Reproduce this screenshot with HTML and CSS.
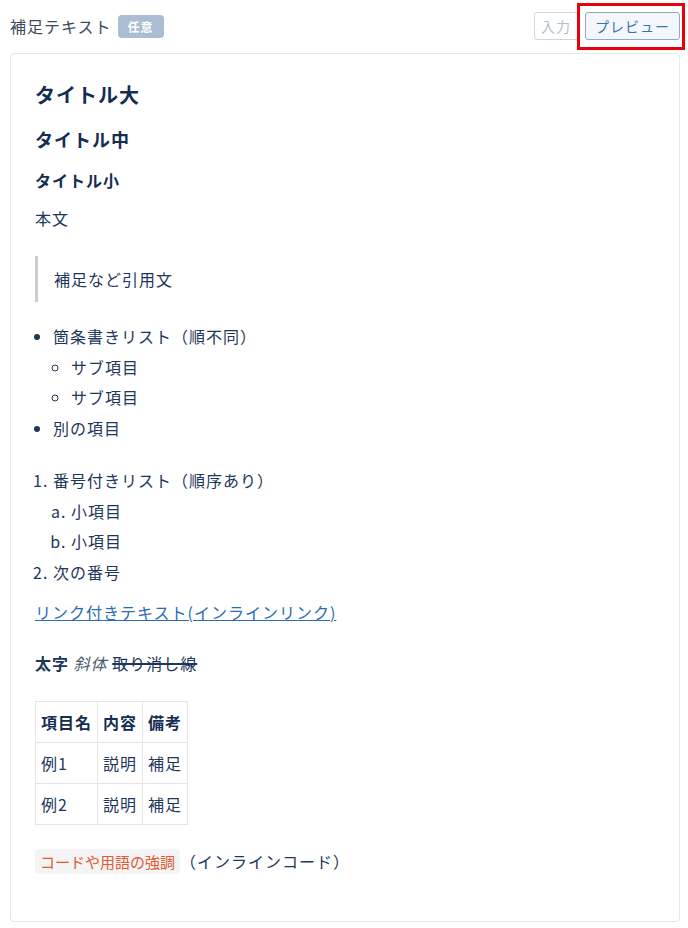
FILE: index.html
```html
<!DOCTYPE html>
<html>
<head>
    <link rel="stylesheet" href="styles.css">
</head>
<body>
    <div class="field">
        <div class="field-head">
            <div class="label">補足テキスト <span class="badge">任意</span></div>
            <div class="tabs">
                <button class="tab">入力</button>
                <button class="tab active">プレビュー<span class="mark"></span></button>
            </div>
        </div>

        <div class="preview">
            <h1>タイトル大</h1>
            <h2>タイトル中</h2>
            <h3>タイトル小</h3>
            <p class="body">本文</p>
            <blockquote>補足など引用文</blockquote>
            <ul>
                <li>箇条書きリスト（順不同）
                    <ul>
                        <li>サブ項目</li>
                        <li>サブ項目</li>
                    </ul>
                </li>
                <li>別の項目</li>
            </ul>
            <ol>
                <li>番号付きリスト（順序あり）
                    <ol type="a">
                        <li>小項目</li>
                        <li>小項目</li>
                    </ol>
                </li>
                <li>次の番号</li>
            </ol>
            <p class="link-line"><a href="#">リンク付きテキスト(インラインリンク)</a></p>
            <p class="deco"><strong>太字</strong> <em>斜体</em> <del>取り消し線</del></p>
            <table>
                <tr><th>項目名</th><th>内容</th><th>備考</th></tr>
                <tr><td>例1</td><td>説明</td><td>補足</td></tr>
                <tr><td>例2</td><td>説明</td><td>補足</td></tr>
            </table>
            <p class="code-line"><code>コードや用語の強調</code>（インラインコード）</p>
        </div>
    </div>
</body>
</html>
```

FILE: styles.css
```css
body {
    margin: 0;
    padding: 12px 8px 0 10px;
    background-color: #ffffff;
    color: #1d3659;
    font-family: "Noto Sans CJK JP", "Noto Sans", sans-serif;
    font-size: 16px;
    line-height: 1.5;
    letter-spacing: 1px;
}
.field-head {
    display: flex;
    align-items: center;
    justify-content: space-between;
    height: 28px;
    margin-bottom: 13px;
}
.label {
    display: flex;
    align-items: center;
    color: #3c4a5c;
    font-size: 16px;
}
.badge {
    margin-left: 6px;
    padding: 0 10px;
    height: 23px;
    line-height: 23px;
    background-color: #aabdd3;
    color: #ffffff;
    font-size: 12px;
    font-weight: bold;
    border-radius: 4px;
}
.tabs {
    display: flex;
    gap: 7px;
}
.tab {
    position: relative;
    height: 28px;
    padding: 0 6px;
    font-family: inherit;
    font-size: 14px;
    line-height: 26px;
    background-color: #ffffff;
    border: 1px solid #cbd7e5;
    border-radius: 3px;
    color: #b3bfcc;
    letter-spacing: 1px;
}
.tab.active {
    padding: 0 9px;
    background-color: #f3f7fc;
    border-color: #8fa9c8;
    color: #3b72b0;
}
.mark {
    position: absolute;
    top: -10px;
    left: -9px;
    right: -6px;
    bottom: -11px;
    border: 3px solid #e8000b;
}
.preview {
    border: 1px solid #e6e6e6;
    border-radius: 4px;
    padding: 26px 24px 46px 24px;
    min-height: 795px;
}
h1 {
    margin: 0 0 16px 0;
    font-size: 20px;
    color: #142d52;
}
h2 {
    margin: 0 0 15px 0;
    font-size: 18px;
    color: #142d52;
}
h3 {
    margin: 0 0 14px 0;
    font-size: 16px;
    color: #142d52;
}
.body {
    margin: 0 0 26px 0;
}
blockquote {
    margin: 0 0 19px 0;
    padding: 11px 16px;
    border-left: 3px solid #cccccc;
}
ul, ol {
    margin: 0;
    padding-left: 18px;
}
li {
    line-height: 30.7px;
}
ul ul {
    list-style-type: circle;
}
.preview > ul {
    margin-bottom: 21px;
}
.preview > ol {
    margin-bottom: 12px;
}
.link-line {
    margin: 0 0 27px 0;
}
a {
    color: #2b6cb3;
}
.deco {
    margin: 0 0 26px 0;
}
em {
    color: #4a5a6e;
}
del {
    text-decoration-thickness: 2px;
}
table {
    border-collapse: collapse;
    margin-bottom: 24px;
}
th, td {
    border: 1px solid #e5e5e5;
    padding: 8px 5px;
    text-align: left;
}
th {
    color: #142d52;
}
.code-line {
    margin: 0;
}
code {
    font-family: inherit;
    font-size: 15px;
    letter-spacing: 0;
    background-color: #f4f4f4;
    color: #e05a33;
    padding: 2px 5px;
    border-radius: 4px;
}
```
